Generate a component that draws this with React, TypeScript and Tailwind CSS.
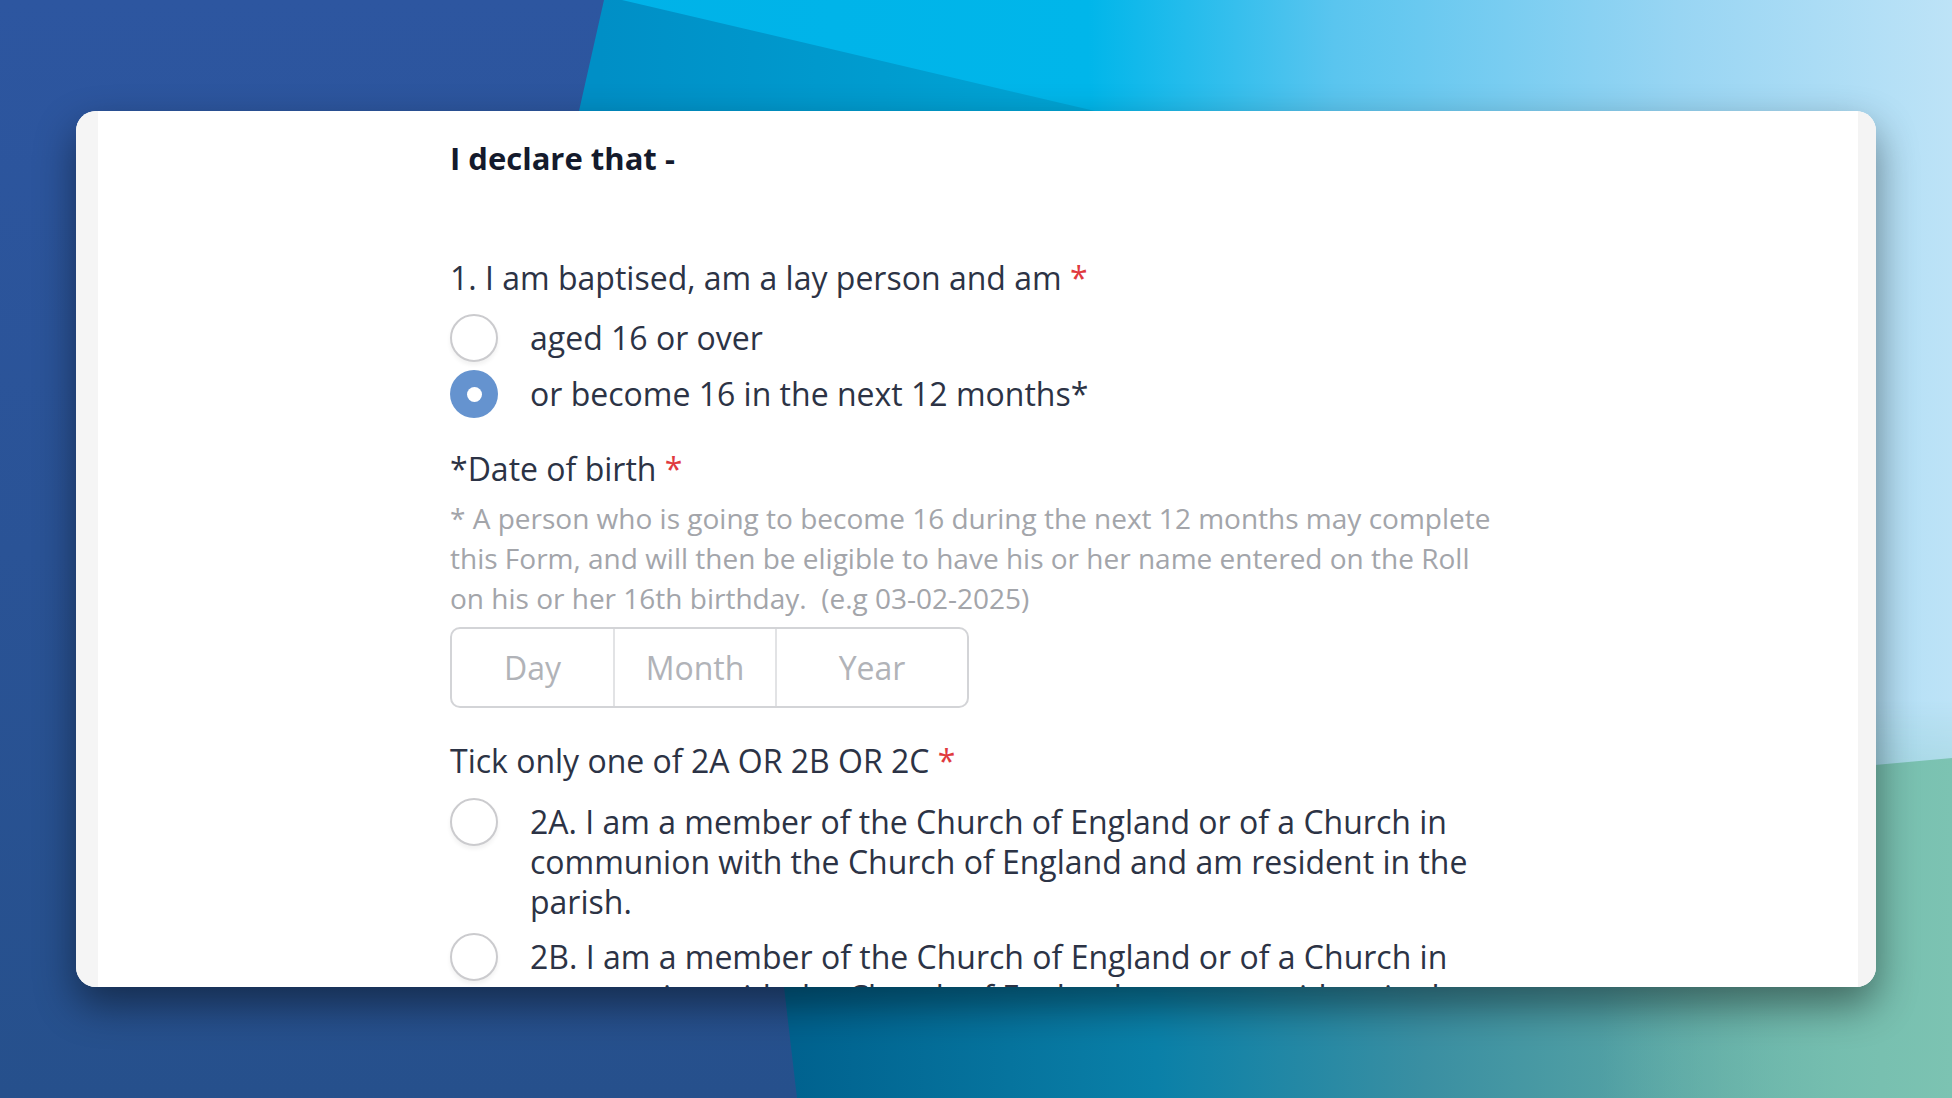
import React from "react";

const Radio = ({ checked = false }: { checked?: boolean }) =>
  checked ? (
    <span className="flex h-12 w-12 shrink-0 items-center justify-center rounded-full bg-[#6593cf]">
      <span className="h-[15px] w-[15px] rounded-full bg-white" />
    </span>
  ) : (
    <span className="block h-12 w-12 shrink-0 rounded-full border-2 border-[#cbcbce] bg-white shadow-[0_3px_4px_rgba(0,0,0,0.06)]" />
  );

const Req = () => <span className="text-[#e03a3e]">*</span>;

function Wallpaper() {
  return (
    <svg className="absolute inset-0 h-full w-full" viewBox="0 0 1952 1098" preserveAspectRatio="none">
      <defs>
        <linearGradient id="topRow" gradientUnits="userSpaceOnUse" x1="580" y1="0" x2="1952" y2="0">
          <stop offset="0" stopColor="#00b2e8" />
          <stop offset="0.37" stopColor="#00b6ea" />
          <stop offset="0.55" stopColor="#5ac5ef" />
          <stop offset="0.8" stopColor="#98d5f3" />
          <stop offset="1" stopColor="#bde3f7" />
        </linearGradient>
        <linearGradient id="bottomRow" gradientUnits="userSpaceOnUse" x1="780" y1="0" x2="1952" y2="0">
          <stop offset="0" stopColor="#00618e" />
          <stop offset="0.32" stopColor="#0a80a8" />
          <stop offset="0.55" stopColor="#3a8fa2" />
          <stop offset="0.8" stopColor="#5ea9a5" />
          <stop offset="1" stopColor="#78c2b2" />
        </linearGradient>
        <linearGradient id="fade" gradientUnits="userSpaceOnUse" x1="0" y1="700" x2="0" y2="1000">
          <stop offset="0" stopColor="#fff" stopOpacity="0" />
          <stop offset="1" stopColor="#fff" stopOpacity="1" />
        </linearGradient>
        <mask id="fadeMask">
          <rect x="0" y="0" width="1952" height="1098" fill="url(#fade)" />
        </mask>
        <linearGradient id="leftBlue" x1="0" y1="0" x2="0" y2="1">
          <stop offset="0" stopColor="#2d56a0" />
          <stop offset="0.5" stopColor="#2a5396" />
          <stop offset="1" stopColor="#26508c" />
        </linearGradient>
        <linearGradient id="darkTri" gradientUnits="userSpaceOnUse" x1="600" y1="0" x2="1100" y2="0">
          <stop offset="0" stopColor="#008fc6" />
          <stop offset="1" stopColor="#00a6d6" />
        </linearGradient>
        <linearGradient id="green" gradientUnits="userSpaceOnUse" x1="1600" y1="0" x2="1952" y2="0">
          <stop offset="0" stopColor="#72bcae" stopOpacity="0" />
          <stop offset="0.8" stopColor="#78c0b0" stopOpacity="1" />
          <stop offset="1" stopColor="#7cc3b2" stopOpacity="1" />
        </linearGradient>
      </defs>
      <rect x="0" y="0" width="1952" height="1098" fill="url(#topRow)" />
      <rect x="0" y="0" width="1952" height="1098" fill="url(#bottomRow)" mask="url(#fadeMask)" />
      <polygon points="600,0 622,0 1095,111 1300,420 480,420" fill="url(#darkTri)" />
      <polygon points="1600,790 1952,758 1952,1098 1600,1098" fill="url(#green)" />
      <path d="M0,0 L604,0 L579,111 C560,220 770,700 784,987 L797,1098 L0,1098 Z" fill="url(#leftBlue)" />
    </svg>
  );
}

export default function App() {
  return (
    <div className="relative h-[1098px] w-[1952px] overflow-hidden font-['Open_Sans',sans-serif]">
      <Wallpaper />

      <div className="relative px-[76px] pt-[111px]">
        <div className="flex h-[876px] overflow-hidden rounded-[20px] bg-white shadow-[0_18px_40px_rgba(0,0,0,0.45)]">
          <div className="w-[22px] shrink-0 bg-[#f5f5f5]" />

          <div className="flex-1 bg-white pl-[352px] pt-[27px]">
            <div className="w-[1052px]">
              <h2 className="text-[31px] leading-[40px] font-bold text-[#141a2c]">I declare that -</h2>

              <p className="mt-[80px] text-[32px] leading-[40px] text-[#2c3345]">
                1. I am baptised, am a lay person and am <Req />
              </p>
              <div className="mt-[12px] flex flex-col text-[32px] leading-[40px] text-[#2c3345]">
                <div className="flex h-[56px] items-center gap-[32px]">
                  <Radio />
                  <span>aged 16 or over</span>
                </div>
                <div className="flex h-[56px] items-center gap-[32px]">
                  <Radio checked />
                  <span>or become 16 in the next 12 months*</span>
                </div>
              </div>

              <p className="mt-[27px] text-[32px] leading-[40px] text-[#2c3345]">
                *Date of birth <Req />
              </p>
              <p className="mt-[9px] text-[28px] leading-[40px] text-[#a3a5aa]">
                * A person who is going to become 16 during the next 12 months may complete this Form, and will then be
                eligible to have his or her name entered on the Roll on his or her 16th birthday.&nbsp; (e.g 03-02-2025)
              </p>

              <div className="mt-[9px] flex h-[81px] w-[519px] overflow-hidden rounded-[10px] border-2 border-[#d3d4d7] text-[32px] text-[#b1b3b8]">
                <div className="flex w-[161px] items-center justify-center">Day</div>
                <div className="flex w-[162px] items-center justify-center border-l-2 border-[#e2e3e5]">Month</div>
                <div className="flex flex-1 items-center justify-center border-l-2 border-[#e2e3e5]">Year</div>
              </div>

              <p className="mt-[33px] text-[32px] leading-[40px] text-[#2c3345]">
                Tick only one of 2A OR 2B OR 2C <Req />
              </p>

              <div className="mt-[21px] flex flex-col gap-[15px] text-[32px] leading-[40px] text-[#2c3345]">
                <div className="flex items-start gap-[32px]">
                  <div className="-mt-[4px] shrink-0">
                    <Radio />
                  </div>
                  <span className="w-[972px] shrink-0">
                    2A. I am a member of the Church of England or of a Church in communion with the Church of England
                    and am resident in the parish.
                  </span>
                </div>
                <div className="flex items-start gap-[32px]">
                  <div className="-mt-[4px] shrink-0">
                    <Radio />
                  </div>
                  <span className="w-[972px] shrink-0">
                    2B. I am a member of the Church of England or of a Church in communion with the Church of England,
                    am not resident in the parish but have habitually attended public worship in the parish during a
                    period of six months prior to enrolment.
                  </span>
                </div>
              </div>
            </div>
          </div>

          <div className="w-[18px] shrink-0 bg-[#f4f4f4]" />
        </div>
      </div>
    </div>
  );
}
